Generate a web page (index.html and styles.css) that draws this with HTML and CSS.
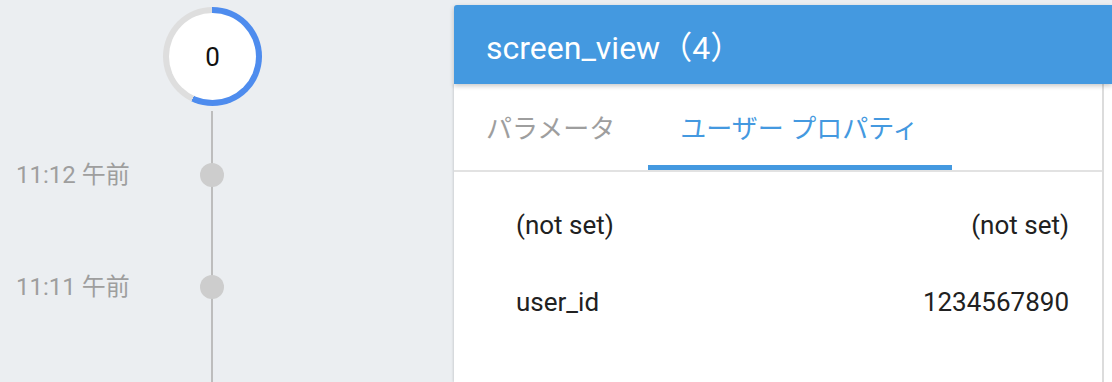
FILE: index.html
```html
<!DOCTYPE html>
<html lang="ja">
<head>
  <meta charset="UTF-8" />
  <meta name="viewport" content="width=device-width, initial-scale=1.0"/>
  <title>DebugView</title>
  <link rel="stylesheet" href="styles.css">
</head>
<body>
  <div class="page">
    <section class="timeline">
      <div class="counter">
        <div class="ring">
          <div class="ring-inner">0</div>
        </div>
      </div>
      <div class="track">
        <div class="event">
          <span class="time">11:12 午前</span>
          <span class="dot"></span>
        </div>
        <div class="event">
          <span class="time">11:11 午前</span>
          <span class="dot"></span>
        </div>
      </div>
    </section>

    <section class="card">
      <header class="card-header">screen_view（4）</header>
      <div class="card-body">
        <div class="panel">
          <nav class="tabs">
            <div class="tab">パラメータ</div>
            <div class="tab active">ユーザー プロパティ</div>
          </nav>
          <div class="props">
            <div class="prop">
              <span>(not set)</span>
              <span>(not set)</span>
            </div>
            <div class="prop">
              <span>user_id</span>
              <span>1234567890</span>
            </div>
          </div>
        </div>
      </div>
    </section>
  </div>
</body>
</html>
```

FILE: styles.css
```css
:root {
  --bg: #ebeef1;
  --blue: #4499e0;
  --ring-blue: #4e8cee;
  --ring-gray: #dedede;
  --line: #bdbdbd;
  --dot: #cdcdcd;
  --muted: #9e9e9e;
  --text: #212121;
}

html, body {
  margin: 0;
  height: 100%;
}

body {
  background: var(--bg);
  font-family: Roboto, "Noto Sans CJK JP", sans-serif;
  color: var(--text);
  overflow: hidden;
}

.page {
  display: flex;
  height: 100vh;
}

/* left column: counter + event timeline */
.timeline {
  width: 454px;
  flex-shrink: 0;
  display: flex;
  flex-direction: column;
}

.counter {
  display: flex;
  padding: 7px 0 5px 163px;
}

.ring {
  width: 99px;
  height: 99px;
  border-radius: 50%;
  background: conic-gradient(var(--ring-blue) 0 57%, var(--ring-gray) 57% 100%);
  display: flex;
  align-items: center;
  justify-content: center;
}

.ring-inner {
  width: 87px;
  height: 87px;
  border-radius: 50%;
  background: #fff;
  display: flex;
  align-items: center;
  justify-content: center;
  font-size: 26px;
  color: #111;
}

.track {
  flex: 1;
  padding-top: 8px;
  background: linear-gradient(var(--line), var(--line)) no-repeat 211px 0 / 2px 100%;
}

.event {
  height: 112px;
  display: flex;
  align-items: center;
}

.time {
  width: 200px;
  padding-left: 16px;
  box-sizing: border-box;
  font-size: 24px;
  line-height: 1;
  color: var(--muted);
}

.dot {
  width: 24px;
  height: 24px;
  border-radius: 50%;
  background: var(--dot);
}

/* right column: event detail card */
.card {
  flex: 1;
  margin-top: 5px;
  display: flex;
  flex-direction: column;
}

.card-header {
  height: 79px;
  flex-shrink: 0;
  box-sizing: border-box;
  padding-left: 32px;
  display: flex;
  align-items: center;
  background: var(--blue);
  color: #fff;
  font-size: 32px;
  border-radius: 3px 0 0 0;
  box-shadow: 0 2px 5px rgba(0, 0, 0, 0.22);
  position: relative;
  z-index: 1;
}

.card-body {
  flex: 1;
  background: #fff;
  padding-right: 8px;
  box-shadow: -1px 0 2px rgba(0, 0, 0, 0.12);
}

.panel {
  height: 100%;
  border-right: 2px solid #dcdcdc;
}

.tabs {
  display: flex;
  height: 88px;
  border-bottom: 2px solid #e2e2e2;
  box-sizing: border-box;
}

.tab {
  padding: 3px 33px 0 32px;
  display: flex;
  align-items: center;
  font-size: 26px;
  color: var(--muted);
  border-bottom: 5px solid transparent;
}

.tab.active {
  color: var(--blue);
  border-bottom-color: var(--blue);
}

.props {
  padding-top: 14px;
}

.prop {
  height: 77px;
  display: flex;
  align-items: center;
  justify-content: space-between;
  padding: 0 33px 0 62px;
  font-size: 26px;
}
```
